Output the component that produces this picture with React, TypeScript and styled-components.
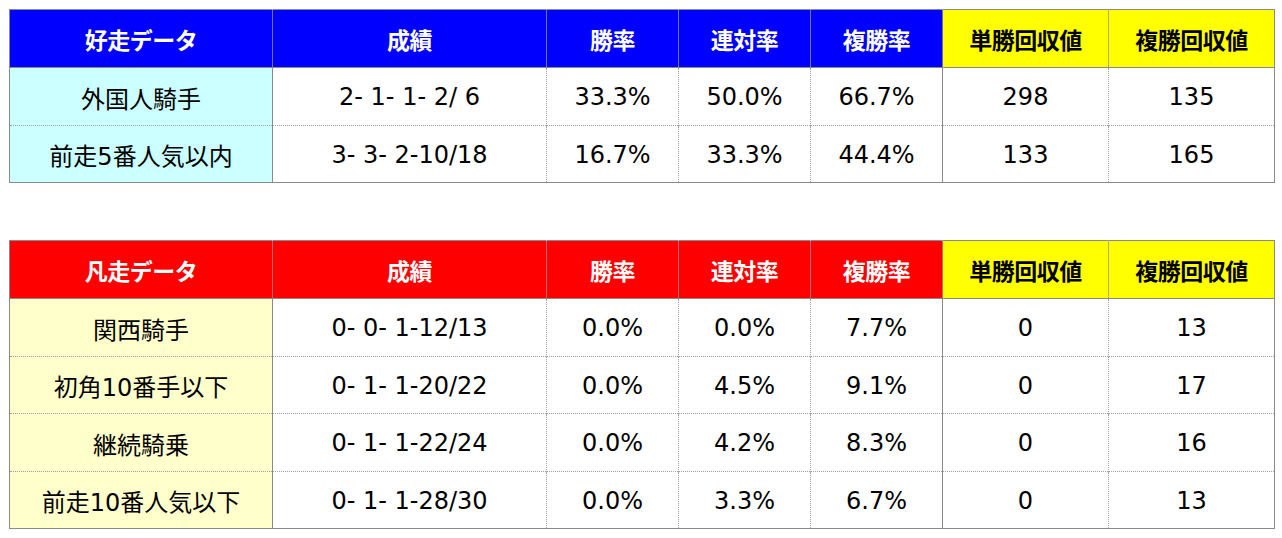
import React from 'react'
import styled, { createGlobalStyle } from 'styled-components'

const GlobalStyle = createGlobalStyle`
  body {
    margin: 0;
    padding: 9px 7px 0 9px;
    background: #ffffff;
    font-family: "DejaVu Sans", "Noto Sans CJK JP", sans-serif;
  }
`

const Page = styled.div`
  display: flex;
  flex-direction: column;
  gap: 57px;
`

const Table = styled.table`
  border-collapse: collapse;
  table-layout: fixed;
  width: 1266px;
  border: 1.5px solid #8a8a8a;
`

const HeadRow = styled.tr`
  height: 58px;
`

const BodyRow = styled.tr`
  height: 57.5px;
  & + & td {
    border-top: 1px dotted #a0a0a0;
  }
`

const HeadCell = styled.th<{ $bg: string; $fg: string }>`
  background: ${p => p.$bg};
  color: ${p => p.$fg};
  font-family: "Noto Sans CJK JP", sans-serif;
  font-weight: 700;
  font-size: 23px;
  letter-spacing: -0.5px;
  text-align: center;
  padding: 0;
  border-left: 1.5px solid rgba(150, 150, 150, 0.75);
  border-bottom: 1px solid #8a8a8a;
  &:first-child {
    border-left: none;
  }
`

const Cell = styled.td<{ $bg?: string; $solid?: boolean }>`
  background: ${p => p.$bg ?? '#ffffff'};
  color: #000000;
  font-size: 24px;
  text-align: center;
  padding: 2px 0 0;
  white-space: pre;
  border-left: ${p => (p.$solid ? '1.5px solid #8a8a8a' : '1px dotted #a0a0a0')};
  &:first-child {
    border-left: none;
  }
`

type Row = [string, string, string, string, string, string, string]

interface DataTableProps {
  title: string
  headColor: string
  labelColor: string
  rows: Row[]
}

const widths = [263, 274, 132, 132, 132, 166, 166]
const headers = ['成績', '勝率', '連対率', '複勝率', '単勝回収値', '複勝回収値']

function DataTable({ title, headColor, labelColor, rows }: DataTableProps) {
  return (
    <Table>
      <colgroup>
        {widths.map((w, i) => (
          <col key={i} style={{ width: w }} />
        ))}
      </colgroup>
      <thead>
        <HeadRow>
          <HeadCell $bg={headColor} $fg="#ffffff">{title}</HeadCell>
          {headers.map((h, i) => (
            <HeadCell
              key={h}
              $bg={i >= 4 ? '#ffff00' : headColor}
              $fg={i >= 4 ? '#000000' : '#ffffff'}
            >
              {h}
            </HeadCell>
          ))}
        </HeadRow>
      </thead>
      <tbody>
        {rows.map(r => (
          <BodyRow key={r[0]}>
            <Cell $bg={labelColor}>{r[0]}</Cell>
            <Cell $solid>{r[1]}</Cell>
            <Cell>{r[2]}</Cell>
            <Cell>{r[3]}</Cell>
            <Cell>{r[4]}</Cell>
            <Cell $solid>{r[5]}</Cell>
            <Cell>{r[6]}</Cell>
          </BodyRow>
        ))}
      </tbody>
    </Table>
  )
}

const goodRows: Row[] = [
  ['外国人騎手', '2- 1- 1- 2/ 6', '33.3%', '50.0%', '66.7%', '298', '135'],
  ['前走5番人気以内', '3- 3- 2-10/18', '16.7%', '33.3%', '44.4%', '133', '165'],
]

const badRows: Row[] = [
  ['関西騎手', '0- 0- 1-12/13', '0.0%', '0.0%', '7.7%', '0', '13'],
  ['初角10番手以下', '0- 1- 1-20/22', '0.0%', '4.5%', '9.1%', '0', '17'],
  ['継続騎乗', '0- 1- 1-22/24', '0.0%', '4.2%', '8.3%', '0', '16'],
  ['前走10番人気以下', '0- 1- 1-28/30', '0.0%', '3.3%', '6.7%', '0', '13'],
]

export default function App() {
  return (
    <>
      <GlobalStyle />
      <Page>
        <DataTable title="好走データ" headColor="#0000ff" labelColor="#ccffff" rows={goodRows} />
        <DataTable title="凡走データ" headColor="#ff0000" labelColor="#ffffcc" rows={badRows} />
      </Page>
    </>
  )
}
